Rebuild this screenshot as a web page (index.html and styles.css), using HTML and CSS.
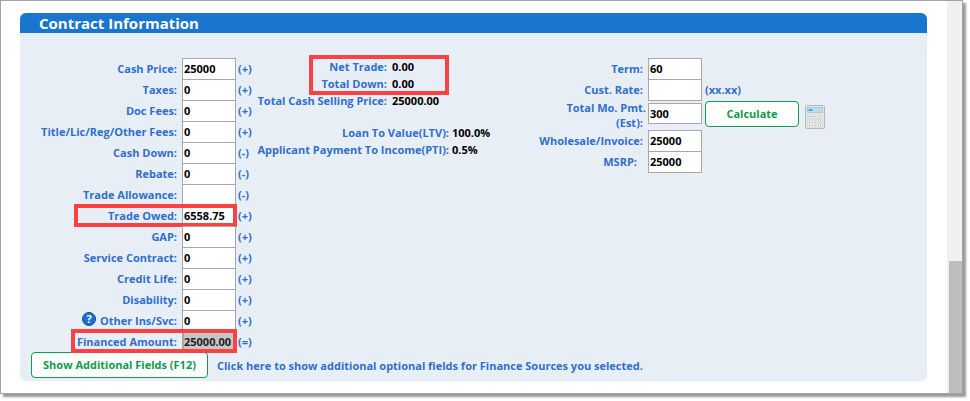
FILE: index.html
```html
<!DOCTYPE html>
<html lang="en">
<head>
<meta charset="utf-8">
<title>Contract Information</title>
<link rel="stylesheet" href="styles.css">
</head>
<body>
<div class="frame">
  <main class="content">
    <section class="panel">
      <h2 class="panel-head">Contract Information</h2>
      <div class="panel-body">
        <div class="columns">
          <div class="col-left">
            <div class="row"><label class="lbl">Cash Price:</label><span class="inp">25000</span><span class="sign">(+)</span></div>
            <div class="row"><label class="lbl">Taxes:</label><span class="inp">0</span><span class="sign">(+)</span></div>
            <div class="row"><label class="lbl">Doc Fees:</label><span class="inp">0</span><span class="sign">(+)</span></div>
            <div class="row"><label class="lbl">Title/Lic/Reg/Other Fees:</label><span class="inp">0</span><span class="sign">(+)</span></div>
            <div class="row"><label class="lbl">Cash Down:</label><span class="inp">0</span><span class="sign">(-)</span></div>
            <div class="row"><label class="lbl">Rebate:</label><span class="inp">0</span><span class="sign">(-)</span></div>
            <div class="row"><label class="lbl">Trade Allowance:</label><span class="inp"></span><span class="sign">(-)</span></div>
            <div class="row mark-row"><label class="lbl">Trade Owed:</label><span class="inp">6558.75</span><span class="sign">(+)</span><span class="mark mark-owed"></span></div>
            <div class="row"><label class="lbl">GAP:</label><span class="inp">0</span><span class="sign">(+)</span></div>
            <div class="row"><label class="lbl">Service Contract:</label><span class="inp">0</span><span class="sign">(+)</span></div>
            <div class="row"><label class="lbl">Credit Life:</label><span class="inp">0</span><span class="sign">(+)</span></div>
            <div class="row"><label class="lbl">Disability:</label><span class="inp">0</span><span class="sign">(+)</span></div>
            <div class="row"><label class="lbl"><svg class="help" viewBox="0 0 14 14" width="14" height="14"><circle cx="7" cy="7" r="6.5" fill="#1a6fd0" stroke="#0d4f9e" stroke-width="1"/><text x="7" y="11" text-anchor="middle" class="help-q">?</text></svg> Other Ins/Svc:</label><span class="inp">0</span><span class="sign">(+)</span></div>
            <div class="row mark-row"><label class="lbl">Financed Amount:</label><span class="inp inp-ro">25000.00</span><span class="sign">(=)</span><span class="mark mark-fin"></span></div>
          </div>
          <div class="col-mid">
            <div class="summary-top">
              <span class="mark mark-net"></span>
              <div class="srow"><span class="lbl slbl">Net Trade:</span><span class="val">0.00</span></div>
              <div class="srow"><span class="lbl slbl">Total Down:</span><span class="val">0.00</span></div>
              <div class="srow"><span class="lbl slbl">Total Cash Selling Price:</span><span class="val">25000.00</span></div>
            </div>
            <div class="summary-bottom">
              <div class="srow"><span class="lbl rlbl">Loan To Value(LTV):</span><span class="val">100.0%</span></div>
              <div class="srow"><span class="lbl rlbl">Applicant Payment To Income(PTI):</span><span class="val">0.5%</span></div>
            </div>
          </div>
          <div class="col-right">
            <div class="row"><label class="lbl lbl-r">Term:</label><span class="inp">60</span></div>
            <div class="row"><label class="lbl lbl-r">Cust. Rate:</label><span class="inp"></span><span class="sign hint">(xx.xx)</span></div>
            <div class="row row-calc"><label class="lbl lbl-r lbl-two"><span class="line-over">Total Mo. Pmt.</span>(Est):</label><span class="inp">300</span><button class="btn btn-calc" type="button">Calculate</button>
              <svg class="calc-icon" viewBox="0 0 20 24" width="20" height="24">
                <rect x="0.5" y="0.5" width="19" height="23" rx="1" fill="#e4e6e8" stroke="#b4b7ba"/>
                <rect x="2.5" y="2.5" width="15" height="5" fill="#bcdcf2" stroke="#9fb6c6" stroke-width="0.6"/>
                <rect x="3.5" y="4" width="4" height="2" fill="#4f9fdc"/>
                <g fill="#f6f6f6" stroke="#c6c8ca" stroke-width="0.5">
                  <rect x="2.5" y="10" width="4" height="3"/><rect x="8" y="10" width="4" height="3"/><rect x="13.5" y="10" width="4" height="3"/>
                  <rect x="2.5" y="14.5" width="4" height="3"/><rect x="8" y="14.5" width="4" height="3"/><rect x="13.5" y="14.5" width="4" height="3"/>
                  <rect x="2.5" y="19" width="4" height="3"/><rect x="8" y="19" width="4" height="3"/><rect x="13.5" y="19" width="4" height="3"/>
                </g>
                <g fill="#8a8c8e"><rect x="4" y="11" width="1" height="1"/><rect x="9.5" y="11" width="1" height="1"/><rect x="15" y="11" width="1" height="1" fill="#d08080"/><rect x="4" y="15.5" width="1" height="1"/><rect x="9.5" y="15.5" width="1" height="1"/><rect x="15" y="15.5" width="1" height="1"/><rect x="4" y="20" width="1" height="1"/><rect x="9.5" y="20" width="1" height="1"/><rect x="15" y="20" width="1" height="1"/></g>
              </svg>
            </div>
            <div class="row"><label class="lbl lbl-r">Wholesale/Invoice:</label><span class="inp">25000</span></div>
            <div class="row"><label class="lbl lbl-r lbl-msrp">MSRP:</label><span class="inp">25000</span></div>
          </div>
        </div>
        <div class="foot">
          <button class="btn btn-more" type="button">Show Additional Fields (F12)</button>
          <span class="lbl foot-note">Click here to show additional optional fields for Finance Sources you selected.</span>
        </div>
      </div>
    </section>
  </main>
  <div class="scrollbar"><div class="thumb"></div></div>
</div>
</body>
</html>
```
FILE: styles.css
```css
* { box-sizing: border-box; }
html, body { margin: 0; padding: 0; background: #fff; overflow: hidden; }
body { width: 970px; height: 401px; font-family: "Open Sans", "Noto Sans", sans-serif; font-size: 11px; font-weight: 700; color: #000; }
.frame { width: 963px; height: 394px; border: 1px solid #a3a3a3; display: flex; box-shadow: 3px 3px 2px #9a9a9a; background: #fff; }
.content { width: 946px; padding: 12px 0 0 19px; }
.panel { width: 907px; height: 368px; background: #e8eef6; border-radius: 6px; display: flex; flex-direction: column; }
.panel-head { margin: 0; height: 20px; background: #1a75cf; color: #fff; font-size: 15px; font-weight: 700; line-height: 20px; padding-left: 19px; border-radius: 6px 6px 0 0; }
.panel-body { flex: 1; display: flex; flex-direction: column; padding-top: 25px; }
.columns { display: flex; height: 295px; }
.col-left { width: 237px; display: flex; flex-direction: column; }
.row { position: relative; display: flex; align-items: center; height: 21px; }
.lbl { color: #2f6fcb; white-space: nowrap; }
.col-left .lbl { width: 157px; margin-right: 5px; flex: none; display: flex; justify-content: flex-end; align-items: center; }
.help { margin-right: 4px; margin-top: -3px; }
.help-q { fill: #fff; font-size: 11px; font-weight: 700; font-family: "Open Sans", sans-serif; }
.inp { flex: none; width: 54px; height: 22px; margin-bottom: -1px; border: 1px solid #a8a8a8; background: #fff; padding-left: 1px; line-height: 20px; color: #000; }
.inp-ro { background: #c6c6c6; color: #222; border-left-width: 2px; border-top-color: #c6c6c6; border-bottom-color: #c6c6c6; border-right-color: #c6c6c6; padding-left: 0; }
.sign { margin-left: 2px; color: #2f6fcb; }
.mark { position: absolute; border: 4px solid #fb4141; pointer-events: none; }
.mark-owed { left: 54px; top: -1px; width: 163px; height: 23px; }
.mark-fin { left: 51px; top: -2px; width: 166px; height: 24px; }
.col-mid { width: 280px; display: flex; flex-direction: column; }
.summary-top { position: relative; width: 200px; }
.mark-net { left: 52px; top: -3px; width: 140px; height: 40px; }
.srow { display: flex; align-items: center; height: 17px; }
.slbl { width: 130px; text-align: right; margin-right: 5px; flex: none; }
.summary-bottom { margin-top: 15px; }
.rlbl { width: 192px; text-align: right; margin-right: 3px; flex: none; }
.val { color: #000; }
.col-right { display: flex; flex-direction: column; }
.col-right .lbl-r { width: 106px; text-align: right; margin-right: 5px; flex: none; }
.lbl-two { white-space: normal; line-height: 15px; }
.line-over { display: block; margin-right: -3px; white-space: nowrap; }
.lbl-msrp { padding-right: 6px; }
.row-calc { height: 30px; }
.row-calc .inp { margin: 0 0 4px; height: 21px; }
.btn { font-family: inherit; font-size: 11px; font-weight: 700; background: #fff; color: #109a4c; border: 1px solid #0f9d50; border-radius: 4px; padding: 0 0 1px; }
.btn-calc { width: 94px; height: 26px; margin: 0 0 2px 3px; }
.calc-icon { margin: 4px 0 0 6px; }
.hint { margin-left: 3px; }
.foot { display: flex; align-items: center; margin-top: -1px; padding-left: 11px; }
.btn-more { width: 177px; height: 26px; }
.foot-note { margin-left: 9px; }
.scrollbar { width: 15px; background: #f0f0f0; display: flex; flex-direction: column; justify-content: flex-end; }
.thumb { height: 132px; margin-left: 2px; background: #bdbdbd; }
```
